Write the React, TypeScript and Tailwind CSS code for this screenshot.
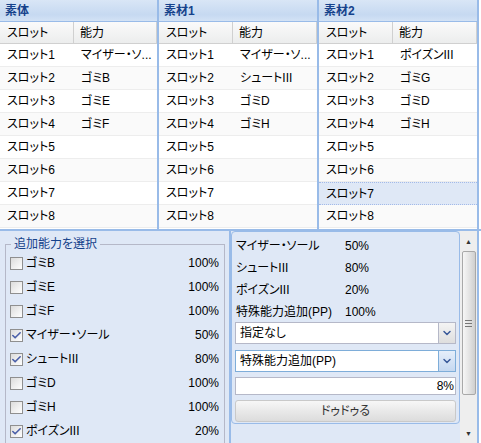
import { Check, ChevronDown } from "lucide-react";

type Row = { slot: string; ability: string };

const font = { fontFamily: '"Liberation Sans", "Noto Sans CJK JP", sans-serif' };

const tables: { title: string; rows: Row[]; hot?: number }[] = [
  {
    title: "素体",
    rows: [
      { slot: "スロット1", ability: "マイザー・ソ..." },
      { slot: "スロット2", ability: "ゴミB" },
      { slot: "スロット3", ability: "ゴミE" },
      { slot: "スロット4", ability: "ゴミF" },
      { slot: "スロット5", ability: "" },
      { slot: "スロット6", ability: "" },
      { slot: "スロット7", ability: "" },
      { slot: "スロット8", ability: "" },
    ],
  },
  {
    title: "素材1",
    rows: [
      { slot: "スロット1", ability: "マイザー・ソ..." },
      { slot: "スロット2", ability: "シュートIII" },
      { slot: "スロット3", ability: "ゴミD" },
      { slot: "スロット4", ability: "ゴミH" },
      { slot: "スロット5", ability: "" },
      { slot: "スロット6", ability: "" },
      { slot: "スロット7", ability: "" },
      { slot: "スロット8", ability: "" },
    ],
  },
  {
    title: "素材2",
    hot: 6,
    rows: [
      { slot: "スロット1", ability: "ポイズンIII" },
      { slot: "スロット2", ability: "ゴミG" },
      { slot: "スロット3", ability: "ゴミD" },
      { slot: "スロット4", ability: "ゴミH" },
      { slot: "スロット5", ability: "" },
      { slot: "スロット6", ability: "" },
      { slot: "スロット7", ability: "" },
      { slot: "スロット8", ability: "" },
    ],
  },
];

const choices = [
  { name: "ゴミB", rate: "100%", on: false },
  { name: "ゴミE", rate: "100%", on: false },
  { name: "ゴミF", rate: "100%", on: false },
  { name: "マイザー・ソール", rate: "50%", on: true },
  { name: "シュートIII", rate: "80%", on: true },
  { name: "ゴミD", rate: "100%", on: false },
  { name: "ゴミH", rate: "100%", on: false },
  { name: "ポイズンIII", rate: "20%", on: true },
];

const summary = [
  { name: "マイザー・ソール", rate: "50%" },
  { name: "シュートIII", rate: "80%" },
  { name: "ポイズンIII", rate: "20%" },
  { name: "特殊能力追加(PP)", rate: "100%" },
];

function SlotTable({ title, rows, hot, width }: { title: string; rows: Row[]; hot?: number; width: string }) {
  return (
    <div className={`${width} shrink-0 border-r-2 border-[#99bbe8] bg-white flex flex-col`}>
      <div className="h-[22px] shrink-0 flex items-center px-[5px] bg-[linear-gradient(#d9e6f6,#c6d9f1_70%,#d3e2f5)] border-b border-[#99bbe8] text-[12px] font-bold text-[#15428b]">
        {title}
      </div>
      <div className="h-[22px] shrink-0 flex bg-[linear-gradient(#fafafa,#eceded)] border-b border-[#d0d0d0] text-[12px]">
        <div className="w-[74px] shrink-0 border-r border-[#d0d0d0] flex items-center pl-[7px]">スロット</div>
        <div className="flex-1 border-r border-[#d0d0d0] flex items-center pl-[6px]">能力</div>
      </div>
      {rows.map((r, i) => (
        <div
          key={i}
          className={`h-[23px] shrink-0 flex items-center text-[12px] border-b ${
            hot === i
              ? "bg-[#dfe8f6] border-dotted border-[#a3bae9] border-t"
              : i % 2 === 1
              ? "bg-[#fafafa] border-[#ededed]"
              : "bg-white border-[#ededed]"
          }`}
        >
          <div className="w-[74px] shrink-0 pl-[7px]">{r.slot}</div>
          <div className="flex-1 min-w-0 pl-[7px] whitespace-nowrap">{r.ability}</div>
        </div>
      ))}
    </div>
  );
}

function Checkbox({ on }: { on: boolean }) {
  return (
    <div className="w-[13px] h-[13px] shrink-0 border border-[#8f8f8f] bg-[linear-gradient(135deg,#dcdcdc,#ffffff)] flex items-center justify-center">
      {on && <Check size={11} strokeWidth={3.5} className="text-[#4a5fa8]" />}
    </div>
  );
}

function Combo({ text, active }: { text: string; active?: boolean }) {
  return (
    <div className={`h-[22px] flex bg-white border ${active ? "border-[#7eadd9]" : "border-[#b5b8c8]"}`}>
      <div className="flex-1 flex items-center pl-[4px] text-[12px]">{text}</div>
      <div
        className={`w-[17px] flex items-center justify-center border-l ${
          active ? "border-[#7eadd9] bg-[linear-gradient(#e5eefa,#c5d8f0)]" : "border-[#b5b8c8] bg-[linear-gradient(#f4f4f4,#dedede)]"
        }`}
      >
        <ChevronDown size={12} strokeWidth={3} className="text-[#3a5a9a]" />
      </div>
    </div>
  );
}

function Scrollbar() {
  return (
    <div className="w-[17px] shrink-0 bg-[#eeeeee] flex flex-col items-center pt-[4px]">
      <div className="h-[14px] flex items-center justify-center text-[7px] text-[#333]">▲</div>
      <div className="mt-[2px] w-[14px] h-[144px] rounded-[2px] border border-[#a8a8a8] bg-[linear-gradient(90deg,#f6f6f6,#e0e0e0_60%,#cfcfcf)] flex flex-col items-center justify-center gap-[2px]">
        <div className="w-[7px] h-px bg-[#777]" />
        <div className="w-[7px] h-px bg-[#777]" />
        <div className="w-[7px] h-px bg-[#777]" />
      </div>
      <div className="flex-1" />
      <div className="h-[14px] flex items-center justify-center text-[7px] text-[#333] mb-[2px]">▼</div>
    </div>
  );
}

export default function App() {
  return (
    <div style={font} className="w-[481px] h-[443px] overflow-hidden bg-white text-black [font-feature-settings:'palt']">
      <div className="h-[229px] flex overflow-hidden">
        <SlotTable {...tables[0]} width="w-[159px]" />
        <SlotTable {...tables[1]} width="w-[160px]" />
        <SlotTable {...tables[2]} width="w-[160px]" />
      </div>
      <div className="h-[2px] bg-[#99bbe8]" />
      <div className="h-[212px] flex bg-[#dfe8f6]">
        <div className="w-[229px] shrink-0 pl-[5px] pr-[4px] pt-[6px]">
          <fieldset className="border border-[#b5b8c8] px-0 pb-2">
            <legend className="ml-[5px] px-[3px] text-[12px] text-[#15428b] leading-[14px]">追加能力を選択</legend>
            {choices.map((c) => (
              <div key={c.name} className="h-[24px] flex items-center pl-[4px] pr-[5px] text-[12px]">
                <Checkbox on={c.on} />
                <span className="ml-[3px] flex-1">{c.name}</span>
                <span>{c.rate}</span>
              </div>
            ))}
          </fieldset>
        </div>
        <div className="w-[2px] bg-[#99bbe8]" />
        <div className="flex-1 flex">
          <div className="flex-1">
            <div className="h-[193px] border border-[#99bbe8] rounded-[4px] flex flex-col px-[3px] pt-[3px]">
              {summary.map((s) => (
                <div key={s.name} className="h-[22px] flex items-center text-[12px] pl-[1px]">
                  <span className="w-[109px]">{s.name}</span>
                  <span>{s.rate}</span>
                </div>
              ))}
              <div className="mt-[-1px] flex flex-col">
                <Combo text="指定なし" />
                <div className="h-[6px]" />
                <Combo text="特殊能力追加(PP)" active />
                <div className="h-[5px]" />
                <div className="h-[18px] bg-white border border-[#b5b8c8] flex items-center justify-end pr-[1px] text-[12px]">8%</div>
                <div className="h-[5px]" />
                <div className="h-[22px] rounded-[3px] border border-[#c9c9c9] bg-[linear-gradient(#f7f7f7,#e9e9e9_50%,#dcdcdc)] flex items-center justify-center text-[12px] text-[#333]">
                  ドゥドゥる
                </div>
              </div>
            </div>
          </div>
          <Scrollbar />
          <div className="w-[2px] bg-[#99bbe8]" />
          <div className="w-[2px] bg-white" />
        </div>
      </div>
    </div>
  );
}
